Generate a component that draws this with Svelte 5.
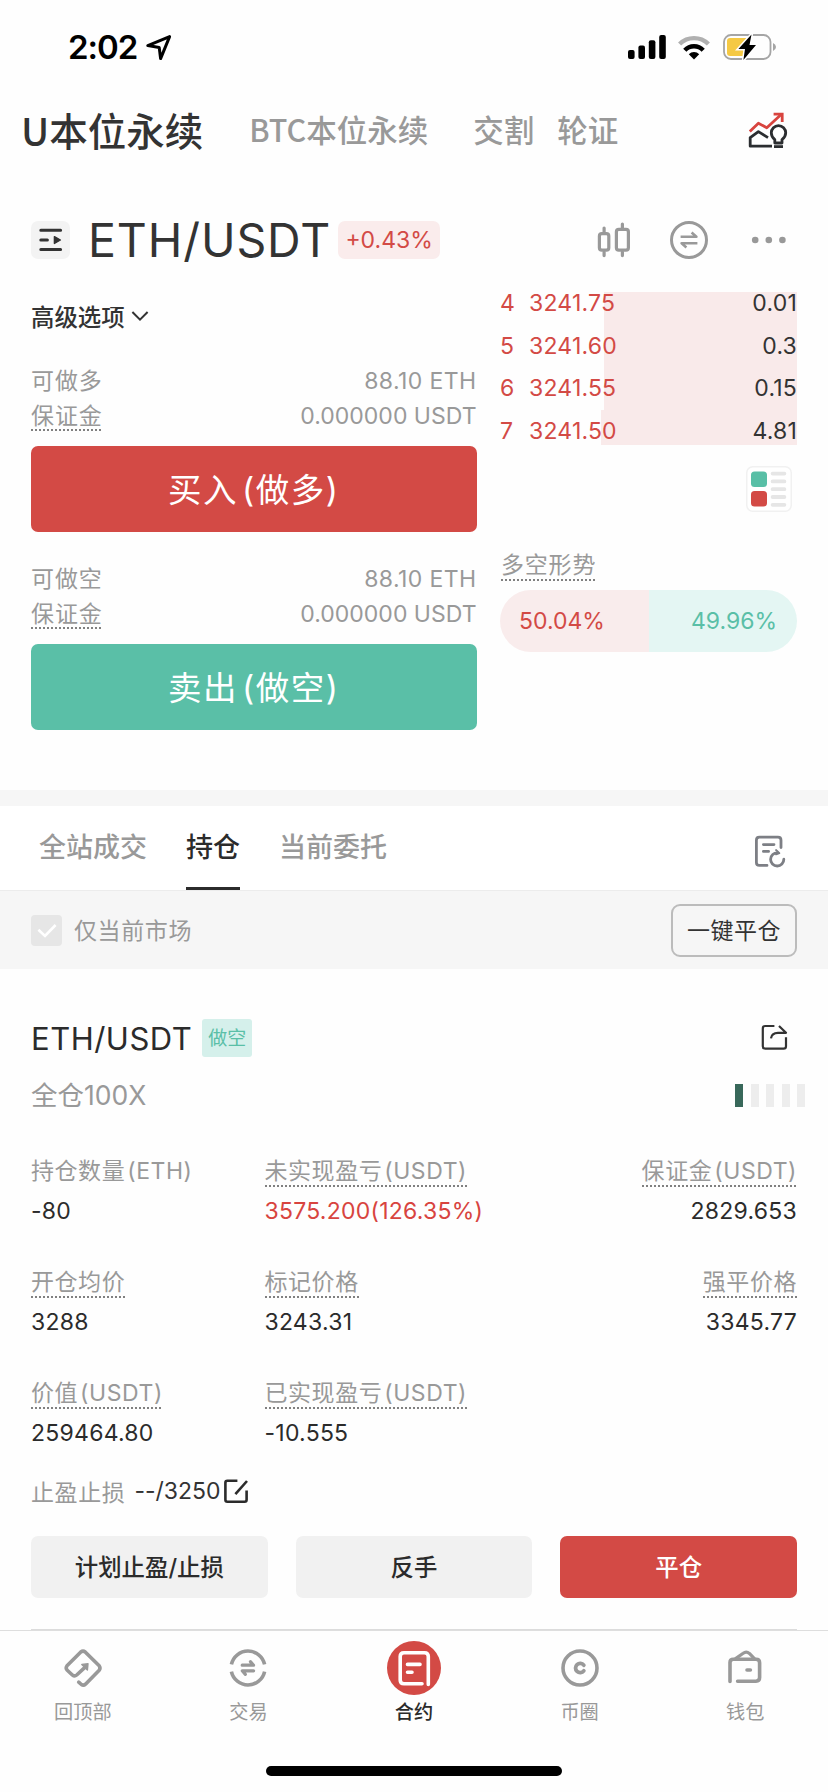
<script lang="ts">
	interface Metric {
		label: string;
		value: string;
		hint?: boolean;
		up?: boolean;
	}

	const markets = ['BTC本位永续', '交割', '轮证'];

	const asks = [
		{ level: 4, price: '3241.75', size: '0.01', depth: 193 },
		{ level: 5, price: '3241.60', size: '0.3', depth: 193 },
		{ level: 6, price: '3241.55', size: '0.15', depth: 193 },
		{ level: 7, price: '3241.50', size: '4.81', depth: 196 }
	];

	const orders = [
		{ side: 'long', label: '可做多', action: '买入 (做多)' },
		{ side: 'short', label: '可做空', action: '卖出 (做空)' }
	];

	const metrics: Metric[] = [
		{ label: '持仓数量 (ETH)', value: '-80', hint: false },
		{ label: '未实现盈亏 (USDT)', value: '3575.200(126.35%)', up: true },
		{ label: '保证金 (USDT)', value: '2829.653' },
		{ label: '开仓均价', value: '3288' },
		{ label: '标记价格', value: '3243.31' },
		{ label: '强平价格', value: '3345.77' },
		{ label: '价值 (USDT)', value: '259464.80' },
		{ label: '已实现盈亏 (USDT)', value: '-10.555' }
	];

	const tabs = ['全站成交', '持仓', '当前委托'];
	let activeTab = $state('持仓');

	const nav = [
		{ id: 'top', label: '回顶部' },
		{ id: 'trade', label: '交易' },
		{ id: 'futures', label: '合约' },
		{ id: 'community', label: '币圈' },
		{ id: 'wallet', label: '钱包' }
	];
	let activeNav = $state('futures');

	let onlyCurrent = $state(true);
	const longRatio = 50.04;
</script>

{#snippet navIcon(id: string)}
	<svg width="54" height="54" viewBox="-27 -27 54 54" fill="none" stroke="#999" stroke-width="3.6" stroke-linecap="round" stroke-linejoin="round">
		{#if id === 'top'}
			<path d="M-4.3 14.1 L-1.6 16.5 Q.5 18 2.5 16.2 L16.2 2.2 Q17.8 0 16.2 -2.2 L2.2 -16 Q0 -17.7 -2.2 -16 L-16 -2.2 Q-17.6 0 -16 2 L-10.4 7.2 Q-8.4 8.8 -6.3 7 L3 -1.6" />
			<path d="M-1.2 -3.6 L5 -4.2 L4.4 2 Z" fill="#999" stroke-width="1.4" />
		{:else if id === 'trade'}
			<path d="M-16.6 -3.6 A17 17 0 0 1 16.6 -3.6 M-16.6 3.6 A17 17 0 0 0 16.6 3.6" stroke-linecap="butt" />
			<path d="M-5.8 -2.8 H5.6 L2.4 -6.4 M5.6 2.8 H-5.8 L-2.6 6.4" stroke-width="3.2" />
		{:else if id === 'futures'}
			<circle r="27" fill="#d34a45" stroke="none" />
			<path d="M14.3 16.5 V-11.5 Q14.3 -15.3 10.5 -15.3 H-10 Q-13.8 -15.3 -13.8 -11.5 V12 Q-13.8 15.8 -10 15.8 H8" stroke="#fff" />
			<path d="M-6.5 -3.6 H6 M-6.5 4.2 H-2" stroke="#fff" />
		{:else if id === 'community'}
			<circle r="17" />
			<path d="M3.8 -2.8 A4.6 4.6 0 1 0 3.8 2.8" stroke-width="3.8" />
		{:else}
			<path d="M-15 13.5 V-5.5 Q-15 -8.8 -11.7 -8.8 H11 Q14.6 -8.8 14.6 -5.2 V9.6 Q14.6 13.2 11 13.2 H-7.4" />
			<path d="M-9.4 -9.4 L-1.8 -14.8 Q1.3 -17.2 4.4 -14.6 L9.4 -9.4" stroke-width="3.2" />
			<path d="M2 2 H5.4" />
		{/if}
	</svg>
{/snippet}

<div class="screen">
	<div class="status">
		<div class="clock">
			<span>2:02</span>
			<svg width="30" height="30" viewBox="0 0 30 30" fill="none" stroke="#000" stroke-width="3" stroke-linejoin="round">
				<path d="M25.6 4.6 L3.8 13.6 L15.2 15.4 L16.6 26.6 Z" />
			</svg>
		</div>
		<div class="signals">
			<svg width="38" height="24" viewBox="0 0 38 24">
				<rect x="0" y="15" width="6.6" height="9" rx="2" />
				<rect x="10.4" y="10.4" width="6.6" height="13.6" rx="2" />
				<rect x="20.8" y="5.2" width="6.6" height="18.8" rx="2" />
				<rect x="31.2" y="0" width="6.6" height="24" rx="2" />
			</svg>
			<svg class="wifi" width="36" height="28" viewBox="0 0 36 28" fill="none" stroke-width="4.4">
				<path d="M3.6 11 A20.6 20.6 0 0 1 32.4 11" stroke="#b0b0b0" />
				<path d="M8.8 17.2 A12.6 12.6 0 0 1 27.2 17.2" stroke="#000" />
				<path d="M18 26.4 L12.8 21.2 A7.4 7.4 0 0 1 23.2 21.2 Z" fill="#000" />
			</svg>
			<svg width="58" height="30" viewBox="0 0 58 30">
				<rect x="3" y="3" width="46.5" height="24" rx="7" fill="none" stroke="#a5a5a5" stroke-width="1.8" />
				<path d="M9 6 H25 V24 H9 Q6 24 6 21 V9 Q6 6 9 6 Z" fill="#f5c944" />
				<path d="M52 11 Q55 12.4 55 15 T52 19 Z" fill="#a5a5a5" />
				<path d="M30.5 2.5 L17.4 17 H24 L22.4 28 L35 13 H28.5 Z" fill="#000" stroke="#fff" stroke-width="3" paint-order="stroke" />
			</svg>
		</div>
	</div>

	<header class="markets">
		<h1>U本位永续</h1>
		{#each markets as market}
			<span class="market">{market}</span>
		{/each}
		<svg class="analysis" width="42" height="42" viewBox="0 0 42 42" fill="none" stroke="#2b2d30" stroke-width="2.8" stroke-linejoin="round">
			<path d="M2.8 21.5 L11.4 13.2 L19.8 17.8 L33.6 5" stroke="#d8443f" />
			<path d="M26.6 4.2 H35.2 V12" stroke="#d8443f" stroke-linejoin="miter" />
			<path d="M25 36.2 H3.2 V27.6 L11.4 21.6 L21 27.6" />
			<path d="M27.8 33 V29.6 Q24.3 26.8 24.3 22.8 A7.2 7.2 0 0 1 38.7 22.8 Q38.7 26.8 35 29.6 V33 Z" />
			<path d="M27 36.6 H36" />
		</svg>
	</header>

	<div class="pair">
		<button class="switcher" aria-label="menu">
			<svg width="39" height="38" viewBox="0 0 39 38" stroke="#333" stroke-width="3" stroke-linecap="round">
				<path d="M9.8 9.3 H29.6 M9.8 19 H16.4 M9.8 28.6 H29.6" />
				<path d="M23.4 15.6 L29.4 19 L23.4 22.4 Z" fill="#333" stroke-width="1.4" stroke-linejoin="round" />
			</svg>
		</button>
		<h2>ETH/USDT</h2>
		<span class="change">+0.43%</span>
		<div class="tools">
			<svg width="36" height="38" viewBox="0 0 36 38" fill="none" stroke="#999" stroke-width="3.2" stroke-linecap="round">
				<rect x="3.4" y="12.6" width="9.4" height="16.6" rx="2.4" />
				<path d="M8.1 7 V11 M8.1 31 V34.6" />
				<rect x="20.4" y="8.4" width="12" height="20.8" rx="2.4" />
				<path d="M26.4 3 V7 M26.4 31 V34.6" />
			</svg>
			<svg width="38" height="38" viewBox="-19 -19 38 38" fill="none" stroke="#999" stroke-width="3">
				<circle r="17.5" />
				<path d="M-8.4 -3.3 H7.4 L2.6 -7.4 M8.4 3.3 H-7.4 L-2.6 7.4" stroke-width="2.6" stroke-linejoin="round" />
			</svg>
			<svg width="36" height="8" viewBox="0 0 36 8" fill="#999">
				<circle cx="4.2" cy="4" r="3.3" />
				<circle cx="17.8" cy="4" r="3.3" />
				<circle cx="31.4" cy="4" r="3.3" />
			</svg>
		</div>
	</div>

	<section class="trade">
		<div class="order-form">
			<div class="advanced">
				高级选项
				<svg width="18" height="12" viewBox="0 0 18 12" fill="none" stroke="#333" stroke-width="2">
					<path d="M1.4 2 L9 9.6 L16.6 2" />
				</svg>
			</div>
			{#each orders as order}
				<div class="order">
					<div class="line available"><span>{order.label}</span><span>88.10 ETH</span></div>
					<div class="line"><span class="hint">保证金</span><span>0.000000 USDT</span></div>
					<button class="submit {order.side}">{order.action}</button>
				</div>
			{/each}
		</div>

		<div class="book">
			<div class="asks">
				{#each asks as ask}
					<div class="ask">
						<div class="depth" style:width="{ask.depth}px"></div>
						<span class="level">{ask.level}</span>
						<span class="price">{ask.price}</span>
						<span class="size">{ask.size}</span>
					</div>
				{/each}
			</div>
			<svg class="layout" width="46" height="46" viewBox="0 0 46 46">
				<rect x=".75" y=".75" width="44.5" height="44.5" rx="6" fill="#fff" stroke="#f1f1f1" stroke-width="1.5" />
				<rect x="5" y="5.5" width="16" height="15.6" rx="3.6" fill="#58bfa6" />
				<rect x="5" y="25" width="16" height="15.6" rx="3.6" fill="#d34a45" />
				<path d="M26.6 7.6 H38.4 M26.6 15.4 H38.4 M26.6 23.2 H38.4 M26.6 31 H38.4 M26.6 38.8 H38.4" stroke="#e6e6e6" stroke-width="3.8" stroke-linecap="round" />
			</svg>
			<div class="sentiment"><span class="hint">多空形势</span></div>
			<div class="ratio">
				<div class="longs" style:width="{longRatio}%">{longRatio}%</div>
				<div class="shorts">49.96%</div>
			</div>
		</div>
	</section>

	<div class="tabs">
		{#each tabs as tab}
			<button class="tab" class:active={tab === activeTab} onclick={() => (activeTab = tab)}>{tab}</button>
		{/each}
		<svg class="history" width="34" height="34" viewBox="0 0 34 34" fill="none" stroke="#7d7f85" stroke-width="2.8" stroke-linecap="round" stroke-linejoin="round">
			<path d="M14 31.4 H6.4 Q3.4 31.4 3.4 28.4 V6.2 Q3.4 3.2 6.4 3.2 H25 Q28 3.2 28 6.2 V13.6" />
			<path d="M10.4 10.6 H21 M10.4 17.4 H15.6" />
			<path d="M30.8 25.2 A6.6 6.6 0 1 1 24.6 18.8" />
			<path d="M23 16 L26.4 19.2 L23 20.4" stroke-width="1.8" />
		</svg>
	</div>

	<div class="filter">
		<label>
			<input type="checkbox" bind:checked={onlyCurrent} />
			<span class="box">
				{#if onlyCurrent}
					<svg width="31" height="31" viewBox="0 0 31 31" fill="none" stroke="#fff" stroke-width="2.6">
						<path d="M7.4 14.8 L14 21 L24.6 10" />
					</svg>
				{/if}
			</span>
			<span class="text">仅当前市场</span>
		</label>
		<button class="close-all">一键平仓</button>
	</div>

	<section class="position">
		<div class="title">
			<h3>ETH/USDT</h3>
			<span class="tag">做空</span>
			<svg class="share" width="30" height="30" viewBox="0 0 30 30" fill="none" stroke="#333" stroke-width="2.2" stroke-linejoin="round">
				<path d="M14.4 3 H5.2 Q2.8 3 2.8 5.4 V23.2 Q2.8 25.6 5.2 25.6 H23.6 Q26 25.6 26 23.2 V14.2" />
				<path d="M11 15.4 Q11.6 9.8 18 9.8 H26 L19 3" />
			</svg>
		</div>
		<div class="leverage">
			<span>全仓100X</span>
			<div class="risk">
				{#each [1, 0, 0, 0, 0] as on}
					<i class:on={on === 1}></i>
				{/each}
			</div>
		</div>
		<div class="metrics">
			{#each metrics as metric}
				<div class="metric">
					<div class="name"><span class:hint={metric.hint !== false}>{metric.label}</span></div>
					<div class="value" class:up={metric.up}>{metric.value}</div>
				</div>
			{/each}
		</div>
		<div class="stops">
			<span>止盈止损</span>
			<b>--/3250</b>
			<svg width="28" height="28" viewBox="0 0 28 28" fill="none" stroke="#2b2b2b" stroke-width="2.6" stroke-linejoin="round">
				<path d="M15.4 3.8 H5.4 Q3.4 3.8 3.4 5.8 V22.8 Q3.4 24.8 5.4 24.8 H22.6 Q24.6 24.8 24.6 22.8 V13.6" />
				<path d="M25 4 L13.4 17.2" />
			</svg>
		</div>
		<div class="actions">
			<button>计划止盈/止损</button>
			<button>反手</button>
			<button class="primary">平仓</button>
		</div>
	</section>

	<nav>
		{#each nav as item}
			<button class:active={item.id === activeNav} onclick={() => (activeNav = item.id)}>
				{@render navIcon(item.id)}
				<span>{item.label}</span>
			</button>
		{/each}
	</nav>
	<div class="home"></div>
</div>

<style>
	:global(body) {
		background: #fefefe;
	}

	.screen {
		width: 828px;
		height: 1792px;
		overflow: hidden;
		font-family: Inter, 'Noto Sans CJK SC', sans-serif;
		font-size: 23px;
		color: #333;
		background: #fefefe;
	}

	h1,
	h2,
	h3 {
		margin: 0;
		font-weight: 400;
	}
	button {
		padding: 0;
		border: 0;
		background: none;
		font: inherit;
		color: inherit;
		cursor: pointer;
	}
	svg {
		display: block;
		flex: none;
	}

	.hint {
		display: inline-block;
		background: repeating-linear-gradient(90deg, #808080 0 2px, transparent 2px 4px) left bottom / 100% 2px
			no-repeat;
	}

	/* status bar */
	.status {
		display: flex;
		align-items: center;
		justify-content: space-between;
		height: 94px;
		padding: 0 49px 0 68px;
		color: #000;
	}
	.clock {
		display: flex;
		align-items: center;
		gap: 7px;
		font-size: 33px;
		font-weight: 600;
		letter-spacing: -1px;
	}
	.signals {
		display: flex;
		align-items: center;
	}
	.wifi {
		margin: 0 9px 0 10px;
	}

	/* market switch */
	.markets {
		display: flex;
		align-items: center;
		height: 74px;
		padding: 0 39px 0 21px;
		font-family: 'Noto Sans CJK SC', sans-serif;
		line-height: 70px;
	}
	h1 {
		height: 74px;
		margin-right: 23px;
		font-size: 38.5px;
		font-weight: 500;
	}
	.market {
		height: 74px;
		margin-left: 23px;
		font-size: 30.5px;
		font-weight: 500;
		color: #999;
	}
	.market:nth-of-type(2) {
		margin-left: 45px;
	}
	.analysis {
		margin-left: auto;
	}

	/* pair */
	.pair {
		display: flex;
		align-items: center;
		height: 84px;
		margin-top: 30px;
		padding: 0 41px 0 31px;
	}
	.switcher {
		border-radius: 7px;
		background: #f3f3f3;
	}
	h2 {
		margin: 0 7px 0 18px;
		font-size: 46.5px;
		letter-spacing: 0.9px;
	}
	.change {
		width: 102px;
		border-radius: 7px;
		background: #faecec;
		color: #d34a45;
		line-height: 38px;
		text-align: center;
	}
	.tools {
		display: flex;
		align-items: center;
		margin-left: auto;
		gap: 38px;
	}
	.tools svg:last-child {
		margin-left: 5px;
	}

	/* order form and book */
	.trade {
		display: grid;
		grid-template-columns: 445.5px 297px;
		justify-content: space-between;
		padding: 0 31px 60px;
		border-bottom: 16px solid #f6f6f6;
	}
	.advanced {
		display: flex;
		align-items: center;
		gap: 6px;
		height: 30px;
		margin: 19px 0 31px;
		font-size: 23.4px;
		font-weight: 500;
	}
	.order {
		margin-bottom: 28px;
	}
	.order:last-child {
		margin-bottom: 0;
	}
	.line {
		display: flex;
		justify-content: space-between;
		align-items: center;
		height: 36px;
		color: #999;
	}
	.line span {
		line-height: 30px;
	}
	.line span:first-child {
		letter-spacing: 0.9px;
	}
	.available {
		letter-spacing: 0.4px;
	}
	.available span {
		line-height: 34px;
		height: 32px;
	}
	.submit {
		width: 100%;
		height: 86px;
		margin-top: 12px;
		padding-bottom: 4px;
		border-radius: 7px;
		color: #fff;
		font-size: 33.5px;
		letter-spacing: 1.5px;
		word-spacing: -7px;
	}
	.long {
		background: #d34a45;
	}
	.short {
		background: #5abfa7;
	}

	.asks {
		height: 152.5px;
		margin-top: 10px;
		overflow: hidden;
	}
	.ask {
		position: relative;
		display: flex;
		height: 42.5px;
		line-height: 43px;
		letter-spacing: 0.2px;
		color: #d34a45;
	}
	.ask:first-child {
		margin-top: -10px;
	}
	.depth {
		position: absolute;
		top: 0;
		right: 0;
		height: 100%;
		background: #f9eaea;
	}
	.ask span {
		position: relative;
	}
	.level {
		width: 29px;
	}
	.size {
		margin-left: auto;
		color: #333;
	}
	.layout {
		margin: 21.5px 5px 0 auto;
	}
	.sentiment {
		height: 32px;
		margin-top: 36.5px;
		padding-left: 1px;
		color: #999;
		letter-spacing: 0.8px;
		line-height: 32px;
	}
	.ratio {
		display: flex;
		height: 62px;
		margin-top: 9px;
		border-radius: 31px;
		overflow: hidden;
		line-height: 63px;
	}
	.longs {
		box-sizing: border-box;
		padding-left: 19px;
		background: #f9ecec;
		color: #d34a45;
	}
	.shorts {
		flex: 1;
		padding-right: 20px;
		background: #e4f6f3;
		color: #5abfa7;
		text-align: right;
	}

	/* tabs */
	.tabs {
		display: flex;
		height: 84px;
		padding: 0 41px 0 39px;
		border-bottom: 1px solid #ececec;
		background: #fff;
	}
	.tab {
		box-sizing: border-box;
		height: 84px;
		margin-right: 39px;
		padding-bottom: 3px;
		border-bottom: 3px solid transparent;
		font-size: 27px;
		font-weight: 500;
		color: #999;
	}
	.tab.active {
		border-color: #2b2b2b;
		color: #2b2b2b;
	}
	.history {
		margin: 28px 0 0 auto;
	}

	.filter {
		display: flex;
		align-items: center;
		justify-content: space-between;
		height: 78px;
		padding: 0 31px;
		background: #f6f6f6;
	}
	.filter label {
		display: flex;
		align-items: center;
		color: #999;
		letter-spacing: 0.6px;
	}
	.text {
		padding-bottom: 2px;
	}
	input {
		display: none;
	}
	.box {
		width: 31px;
		height: 31px;
		margin-right: 12px;
		border-radius: 4px;
		background: #e6e6e6;
	}
	.close-all {
		box-sizing: border-box;
		width: 126px;
		height: 53px;
		padding-bottom: 2px;
		border: 2px solid #bcbcbc;
		border-radius: 9px;
		letter-spacing: 0.5px;
	}

	/* position card */
	.position {
		margin: 0 31px;
		padding: 50px 0 31px;
		border-bottom: 1px solid #dcdcdc;
	}
	.title {
		display: flex;
		align-items: center;
		height: 38px;
	}
	h3 {
		font-size: 31px;
		letter-spacing: 0.5px;
		color: #2b2b2b;
	}
	.tag {
		width: 50px;
		height: 38px;
		margin-left: 10px;
		border-radius: 3px;
		background: #d5f0eb;
		color: #5abfa7;
		font-size: 19px;
		line-height: 39px;
		text-align: center;
	}
	.share {
		margin: 0 7px 0 auto;
	}
	.leverage {
		display: flex;
		align-items: center;
		justify-content: space-between;
		height: 36px;
		margin-top: 20px;
		font-size: 26.5px;
		color: #999;
	}
	.leverage span {
		padding-bottom: 4px;
	}
	.risk {
		display: flex;
		gap: 7.5px;
		margin-right: -8px;
	}
	.risk i {
		width: 8px;
		height: 23px;
		background: #ededed;
	}
	.risk i.on {
		background: #38685a;
	}
	.metrics {
		display: grid;
		grid-template-columns: 233.5px 1fr auto;
		row-gap: 40px;
		margin-top: 42px;
	}
	.metric {
		line-height: 32px;
	}
	.metric:nth-child(3n) {
		text-align: right;
	}
	.name {
		height: 31px;
		margin-bottom: 9px;
		color: #999;
		letter-spacing: 0.55px;
		word-spacing: -5px;
	}
	.value {
		height: 31px;
		color: #2b2b2b;
		letter-spacing: 0.25px;
	}
	.value.up {
		color: #d8443f;
	}
	.stops {
		display: flex;
		align-items: center;
		height: 30px;
		margin-top: 28px;
	}
	.stops span {
		margin-right: 9px;
		color: #999;
		letter-spacing: 0.6px;
	}
	.stops b {
		margin-right: 1px;
		font-weight: 400;
	}
	.actions {
		display: grid;
		grid-template-columns: repeat(3, 1fr);
		gap: 28px;
		margin-top: 30px;
	}
	.actions button {
		height: 62px;
		padding-bottom: 2px;
		border-radius: 7px;
		background: #f1f1f1;
		color: #2b2b2b;
		font-size: 23.4px;
		font-weight: 500;
	}
	.actions .primary {
		background: #d34a45;
		color: #fff;
	}

	/* bottom navigation */
	nav {
		display: grid;
		grid-template-columns: repeat(5, 1fr);
		padding-top: 10px;
		border-top: 1px solid #dedede;
	}
	nav button {
		display: flex;
		flex-direction: column;
		align-items: center;
		gap: 5px;
		font-size: 19.2px;
		line-height: 24px;
		color: #999;
	}
	nav button.active {
		color: #2b2b2b;
		font-weight: 500;
	}
	.home {
		width: 296px;
		height: 10px;
		margin: 42px auto 0;
		border-radius: 5px;
		background: #000;
	}
</style>
